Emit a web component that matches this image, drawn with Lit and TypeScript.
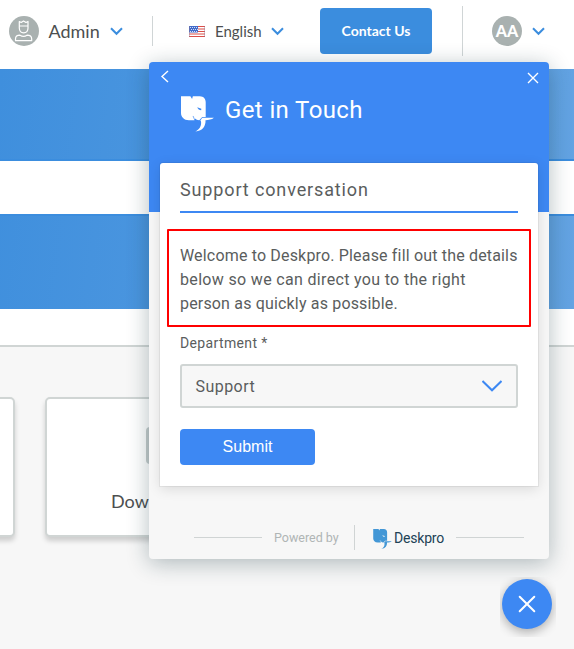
import { LitElement, html, css, svg } from "lit";
import { customElement } from "lit/decorators.js";

const elephant = (body: string, gap: string) => svg`
  <path fill=${body} d="M0 0H9.5L11.2 2.8L12 0H19C23 0 25 2.8 25 6V21H21.5L18.5 24.3C16.5 24.3 15.3 23.6 14.6 22.6L13.6 24.3H8C3 24.3 0 21 0 17Z"/>
  <path fill=${body} d="M21.5 21.9H33.3C31 23.8 28 24.2 24.8 24.4C25.2 29.5 22.2 35.6 14.5 35.6C18.5 33.8 20.8 30.5 20.3 25.5L19.6 24.6Z"/>
  <path fill=${gap} d="M16.4 11.2L20.6 12.6L20.4 14.2C18.5 14.2 17.2 13 16.4 11.2Z"/>
  <path stroke=${gap} stroke-width="0.7" fill="none" d="M12.2 20L14 24.3"/>
`;

@customElement("top-bar")
export class TopBar extends LitElement {
  static styles = css`
    :host { display: flex; height: 69px; background: #fff; align-items: flex-start; font-family: Lato, sans-serif; color: #4c4f50; box-sizing: border-box; }
    svg { display: block; flex: none; }
    .group { display: flex; align-items: center; height: 62px; flex: none; }
    .user { width: 152px; padding-left: 9px; box-sizing: border-box; border: 0; }
    .avatar { width: 30px; height: 30px; border-radius: 50%; background: #a9b1b0; flex: none; }
    .name { font-size: 18px; line-height: 24px; width: 51px; margin: 0 10px 0 9.5px; white-space: nowrap; }
    .rule { width: 1px; height: 30px; background: #d0d5d6; margin-top: 16px; }
    .tall { height: 50px; margin-top: 6px; }
    .lang { width: 167px; padding-left: 36px; box-sizing: border-box; }
    .lang span { font-size: 15px; line-height: 20px; width: 48px; margin: 0 8px 0 10px; }
    .contact { width: 112px; height: 46px; margin-top: 8px; border-radius: 4px; background: #3b8dde; color: #fff; font-weight: 700; font-size: 14px; line-height: 46px; text-align: center; flex: none; }
    .me { padding-left: 29px; }
    .initials { color: #fff; font-weight: 900; font-size: 16px; line-height: 30px; text-align: center; margin-right: 10px; }
    .spacer { width: 30px; flex: none; }
  `;
  render() {
    const chevron = (w: number) => svg`<svg width=${w} height="9" viewBox="0 0 13 9"><path d="M1 1.3L6.5 6.8L12 1.3" fill="none" stroke="#3b8dde" stroke-width="2"/></svg>`;
    return html`
      <div class="group user">
        <div class="avatar">
          <svg width="30" height="30" viewBox="0 0 30 30" fill="none" stroke="#fff" stroke-width="1.2" stroke-linejoin="round">
            <path d="M10.3 5.5L12.2 6.5L14.5 5L17 6.5L19 5.5V12C19 15 17.2 16.8 14.6 16.8S10.3 15 10.3 12ZM10.3 10H19"/>
            <path d="M6.5 24.7V23C6.5 20.5 8.3 19.2 11 19.2C13 20.6 16 20.6 18 19.2C21 19.2 22.7 20.5 22.7 23V24.7Z"/>
          </svg>
        </div>
        <span class="name">Admin</span>${chevron(13)}
      </div>
      <div class="rule"></div>
      <div class="group lang">
        <svg width="16" height="11" viewBox="0 0 16 11">
          <rect width="16" height="11" fill="#fff"/>
          <path d="M0 .5H16M0 3H16M0 5.5H16M0 8H16M0 10.5H16" stroke="#db4e49"/>
          <rect width="9" height="6.5" fill="#426bc8"/>
          <path d="M1 1.5H8M2 3.5H9M1 5.5H8" stroke="#e4eaff" stroke-width=".9" stroke-dasharray="1 1"/>
          <path d="M.3 0V11M15.7 0V11" stroke="#8b7796" stroke-width=".5"/>
        </svg>
        <span>English</span>${chevron(13)}
      </div>
      <div class="contact">Contact Us</div>
      <div class="spacer"></div>
      <div class="rule tall"></div>
      <div class="group me"><div class="avatar initials">AA</div>${chevron(13)}</div>
    `;
  }
}

@customElement("chat-widget")
export class ChatWidget extends LitElement {
  static styles = css`
    :host { display: flex; flex-direction: column; width: 400px; height: 497px; border-radius: 4px; overflow: hidden; background: #f7f7f7; font-family: Roboto, sans-serif; color: #5a5d5d; box-shadow: 0 4px 22px rgba(20, 50, 60, .32); }
    svg { display: block; flex: none; }
    .head { height: 150px; background: #3d88f3; flex: none; color: #fff; }
    .tools { display: flex; justify-content: space-between; padding: 8px 10px 0 11px; height: 26px; box-sizing: border-box; }
    .brand { display: flex; padding: 8px 0 0 32px; }
    .brand span { font-size: 24px; line-height: 28px; letter-spacing: .38px; margin-left: 11px; }
    .card { margin: -49px 11px 0; height: 323px; flex: none; box-sizing: border-box; background: #fff; border-radius: 3px 3px 0 0; box-shadow: 0 0 0 1px rgba(0,0,0,.05), 0 3px 13px rgba(0,0,0,.12); padding: 0 20px; }
    .title { height: 50px; box-sizing: border-box; border-bottom: 2px solid #3d88f3; padding-top: 15px; font-size: 18px; line-height: 24px; letter-spacing: .87px; }
    .intro { margin: 31px -10px 0 0; font-size: 16px; line-height: 24px; letter-spacing: .17px; }
    .intro div { white-space: nowrap; }
    .intro .wide { letter-spacing: .33px; }
    .label { margin-top: 18px; font-size: 14px; line-height: 18px; letter-spacing: .36px; }
    .select { margin-top: 12px; height: 44px; box-sizing: border-box; border: 2px solid #d0d5d4; border-radius: 3px; background: #f7f7f7; display: flex; justify-content: space-between; align-items: center; padding: 0 14px 0 13.5px; font-size: 16px; letter-spacing: .45px; }
    .submit { margin-top: 21px; width: 135px; height: 36px; border-radius: 4px; background: #3d88f3; color: #fff; text-align: center; font: 16px/35px "Liberation Sans", sans-serif; }
    .foot { display: flex; align-items: center; height: 26px; margin: 38px 25px 0 45px; color: #b0b5b5; font-size: 12.5px; }
    .line { height: 1px; width: 68px; background: #d0d4d4; }
    .by { margin: 0 14px 0 12px; width: 66px; white-space: nowrap; }
    .bar { width: 1px; height: 25px; background: #d0d4d4; margin-right: 18px; }
    .logo { margin: 4px 2px 0 0; }
    .word { color: #214256; font-size: 14px; letter-spacing: -.2px; width: 51px; margin: 2px 11px 0 0; white-space: nowrap; }
  `;
  render() {
    return html`
      <div class="head">
        <div class="tools">
          <svg width="9" height="13" viewBox="0 0 9 13"><path d="M8 1L2 6.5L8 12" fill="none" stroke="#fff" stroke-width="1.4"/></svg>
          <svg width="12" height="16" viewBox="0 0 12 16"><path d="M1 3L11 13M11 3L1 13" stroke="#fff" stroke-width="1.4"/></svg>
        </div>
        <div class="brand">
          <svg width="33" height="36" viewBox="0 0 33.4 36">${elephant("#fff", "#3d88f3")}</svg>
          <span>Get in Touch</span>
        </div>
      </div>
      <div class="card">
        <div class="title">Support conversation</div>
        <div class="intro">
          <div>Welcome to Deskpro. Please fill out the details</div>
          <div class="wide">below so we can direct you to the right</div>
          <div>person as quickly as possible.</div>
        </div>
        <div class="label">Department *</div>
        <div class="select">Support
          <svg width="20" height="12" viewBox="0 0 20 12"><path d="M.5 1L10 10.3L19.5 1" fill="none" stroke="#3d88f3" stroke-width="2"/></svg>
        </div>
        <div class="submit">Submit</div>
      </div>
      <div class="foot">
        <div class="line"></div>
        <span class="by">Powered by</span>
        <div class="bar"></div>
        <svg class="logo" width="19" height="20" viewBox="0 0 33.4 36">${elephant("#4397d6", "#f7f7f7")}</svg>
        <span class="word">Deskpro</span>
        <div class="line"></div>
      </div>
    `;
  }
}

@customElement("app-root")
export class AppRoot extends LitElement {
  static styles = css`
    :host { display: block; position: relative; width: 574px; height: 649px; overflow: hidden; background: #f7f7f7; font-family: Lato, sans-serif; }
    .hero { height: 240px; padding-top: 90px; box-sizing: border-box; background: linear-gradient(97deg, #3f8fdd, #64a4e3); }
    .search { height: 53px; background: #fff; border: solid #3b8dde; border-width: 2px 0; }
    .band { height: 36px; background: #fff; border-bottom: 2px solid #d0d5d4; }
    .cards { display: flex; gap: 30px; padding-top: 50px; }
    .tile { height: 140px; width: 220px; flex: none; box-sizing: border-box; border: 2px solid #d0d5d4; border-radius: 5px; background: #fff; box-shadow: 0 4px 5px rgba(0,0,0,.17); color: #4c4f50; font-size: 18px; text-align: center; }
    .first { margin-left: -205px; }
    .icon { width: 20px; height: 37px; margin: 28px 0 0 99px; border-radius: 4px; background: #c5cccc; }
    .caption { margin-top: 25px; text-align: left; padding-left: 64px; line-height: 24px; }
    .widget { position: absolute; left: 149px; top: 62px; }
    .mark { position: absolute; left: 167px; top: 229px; width: 364px; height: 98px; box-sizing: border-box; border: 2px solid #f00; border-radius: 1px; }
    .launch { position: absolute; left: 500px; top: 577px; width: 56px; height: 60px; overflow: hidden; }
    .round { width: 50px; height: 50px; margin: 2px; border-radius: 50%; background: #3d88f3; box-shadow: 0 3px 11px rgba(0,0,0,.32); display: flex; align-items: center; justify-content: center; }
  `;
  render() {
    return html`
      <top-bar></top-bar>
      <div class="hero"><div class="search"></div></div>
      <div class="band"></div>
      <div class="cards">
        <div class="tile first"></div>
        <div class="tile"><div class="icon"></div><div class="caption">Downloads</div></div>
      </div>
      <chat-widget class="widget"></chat-widget>
      <div class="mark"></div>
      <div class="launch"><div class="round">
        <svg width="18" height="18" viewBox="0 0 18 18"><path d="M1.7 1.7L16.3 16.3M16.3 1.7L1.7 16.3" stroke="#fff" stroke-width="2" stroke-linecap="round"/></svg>
      </div></div>
    `;
  }
}
